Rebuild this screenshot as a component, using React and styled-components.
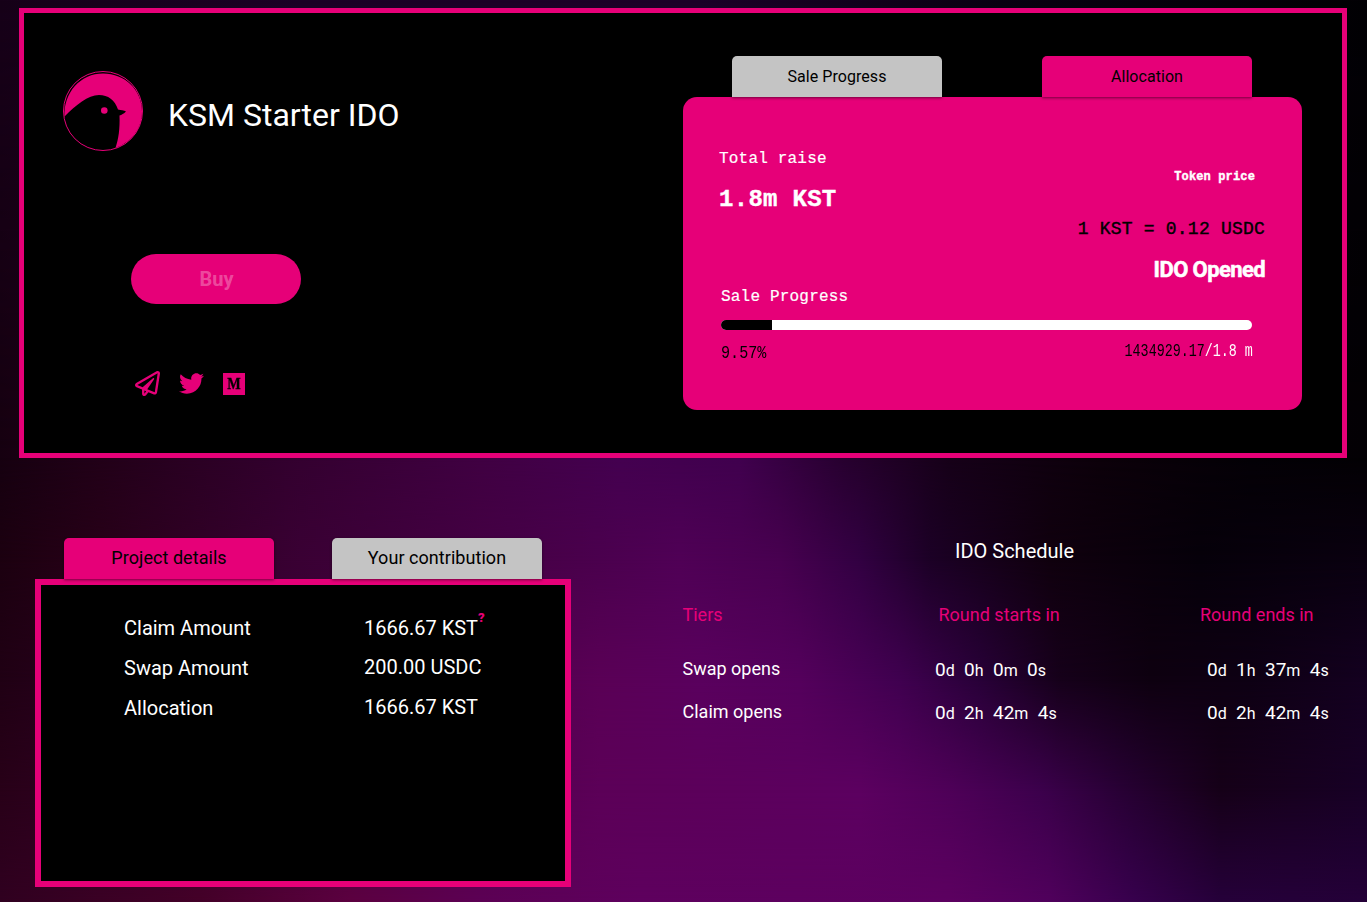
import React from "react";
import styled, { createGlobalStyle } from "styled-components";
import { FaRegPaperPlane, FaTwitter } from "react-icons/fa";

const GlobalStyle = createGlobalStyle`
  * {
    box-sizing: border-box;
  }

  body {
    margin: 0;
    background: #000000;
    color: #ffffff;
    font-family: Roboto, sans-serif;
    overflow: hidden;
  }
`;

const pink = "#e60078";

const Page = styled.div`
  position: relative;
  width: 1367px;
  height: 902px;
  padding: 8px 20px 0 19px;
  overflow: hidden;
  isolation: isolate;
`;

const Glow = styled.div`
  position: absolute;
  inset: 0;
  z-index: -1;
  background: linear-gradient(90deg, ${props => props.stops});
  mask-image: linear-gradient(
    180deg,
    transparent ${props => props.from}px,
    #000 ${props => props.to}px
  );
`;

const Hero = styled.section`
  display: flex;
  justify-content: space-between;
  height: 450px;
  padding: 43px 40px 0 39px;
  border: 5px solid ${pink};
  background: #000000;
`;

const Brand = styled.div`
  display: flex;
  align-items: center;
  gap: 25px;
  margin-top: 15px;
`;

const Title = styled.h1`
  margin: 8px 0 0;
  font-size: 32px;
  font-weight: 400;
  line-height: 38px;
`;

const BuyButton = styled.button`
  display: block;
  width: 170px;
  height: 50px;
  margin: 103px 0 0 68px;
  padding: 0 0 0 1px;
  border: 0;
  border-radius: 25px;
  background: ${pink};
  color: rgba(255, 255, 255, 0.3);
  font-family: Roboto, sans-serif;
  font-size: 20px;
  font-weight: 700;
`;

const Socials = styled.div`
  display: flex;
  align-items: center;
  gap: 19px;
  margin: 67px 0 0 72px;
  color: ${pink};
  font-size: 25px;

  svg {
    display: block;
  }
`;

const MediumMark = styled.span`
  display: flex;
  align-items: center;
  justify-content: center;
  width: 22px;
  height: 22px;
  background: ${pink};
  color: #000000;
  font-family: "Liberation Serif", serif;
  font-size: 17px;
  font-weight: 700;
  line-height: 22px;
  -webkit-text-stroke: 0.3px #000000;

  span {
    transform: scaleX(0.84);
  }
`;

const Sale = styled.div`
  width: 619px;
`;

const Tabs = styled.div`
  display: flex;
  gap: ${props => props.gap}px;
  padding-left: ${props => props.indent}px;
`;

const Tab = styled.button`
  position: relative;
  width: 210px;
  height: 41px;
  padding: 0 0 ${props => props.lift || 0}px;
  border: 0;
  border-radius: 5px 5px 0 0;
  background: ${props => (props.active ? pink : "#c4c4c4")};
  box-shadow: 0 1px 3px rgba(0, 0, 0, 0.5);
  color: #000000;
  font-family: Roboto, sans-serif;
  font-size: ${props => props.size}px;
  font-weight: 400;
  letter-spacing: ${props => props.spacing || 0}px;
`;

const SaleCard = styled.div`
  height: 313px;
  padding: 50px 37px 0 36px;
  border-radius: 14px;
  background: ${pink};
`;

const Figures = styled.div`
  display: flex;
  justify-content: space-between;
  height: 138px;
`;

const Mono = styled.div`
  font-family: "Liberation Mono", monospace;
  font-size: ${props => props.size}px;
  font-weight: ${props => (props.bold ? 700 : 400)};
  letter-spacing: 0.012em;
  line-height: 24px;
  white-space: pre;
  -webkit-text-stroke: ${props => (props.bold ? 0.4 : 0.2)}px currentColor;
`;

const Raised = styled(Mono)`
  margin-top: 17px;
`;

const Price = styled.div`
  display: flex;
  flex-direction: column;
  align-items: flex-end;
  padding-top: 18px;
`;

const TokenLabel = styled(Mono)`
  margin-right: 10px;
`;

const Rate = styled(Mono)`
  margin-top: 28px;
  color: #000000;
  -webkit-text-stroke: 0.4px #000000;
`;

const Status = styled.div`
  margin-top: 16px;
  font-size: 22px;
  font-weight: 700;
  letter-spacing: -0.6px;
  line-height: 26px;
  -webkit-text-stroke: 0.5px #ffffff;
`;

const Progress = styled.div`
  width: 531px;
  margin-left: 2px;
`;

const Track = styled.div`
  height: 10px;
  margin-top: 11px;
  border-radius: 5px;
  background: #ffffff;
  overflow: hidden;
`;

const Bar = styled.div`
  height: 100%;
  background: #000000;
`;

const Amounts = styled.div`
  display: flex;
  justify-content: space-between;
  margin: 10px -1px 0 0;
  color: #000000;
  font-family: "Liberation Mono", monospace;
  font-size: 18px;
  line-height: 22px;
  white-space: pre;
`;

const Percent = styled.span`
  margin-top: 2px;
  transform: scaleX(0.84);
  transform-origin: 0 50%;
`;

const Sold = styled.span`
  transform: scaleX(0.742);
  transform-origin: 100% 50%;
`;

const Cap = styled.span`
  color: #ffffff;
`;

const Lower = styled.section`
  display: flex;
  padding: 80px 0 0 16px;
`;

const Details = styled.div`
  width: 536px;
`;

const DetailCard = styled.div`
  height: 308px;
  padding: 28px 0 0 83px;
  border: 6px solid ${pink};
  background: #000000;
`;

const DetailRow = styled.div`
  display: grid;
  grid-template-columns: 240px 1fr;
  height: 40px;
  font-size: 20px;
  line-height: 30px;

  &:first-child {
    height: 39px;
  }
`;

const DetailLabel = styled.span`
  padding-top: ${props => props.drop || 0}px;
`;

const Hint = styled.sup`
  color: ${pink};
  font-size: 13px;
  font-weight: 900;
  line-height: 0;
  vertical-align: 13px;
`;

const Schedule = styled.div`
  width: 665px;
  margin-left: 111px;
`;

const ScheduleTitle = styled.h2`
  margin: 0;
  font-size: 20px;
  font-weight: 400;
  line-height: 26px;
  text-align: center;
`;

const ScheduleRow = styled.div`
  display: grid;
  grid-template-columns: 252.5px 272px 1fr;
  height: 43px;
  padding-left: 0.5px;
  font-size: 18px;
  line-height: 24px;
`;

const ScheduleHead = styled(ScheduleRow)`
  grid-template-columns: 256px 261.5px 1fr;
  height: 54px;
  margin-top: 39px;
  color: ${pink};
`;

const Countdown = styled.span`
  display: flex;
  gap: 9.4px;
  padding-top: 1px;
  font-size: 19px;
  white-space: nowrap;
`;

const Unit = styled.small`
  font-size: 16px;
`;

// one strip of colour per height, each one faded into the next
const glows = [
  {
    from: -2,
    to: -1,
    stops:
      "#160018 0px, #1c0026 300px, #1c0028 700px, #0a0012 1000px, #020004 1367px"
  },
  {
    from: 0,
    to: 458,
    stops:
      "#160010 0px, #220018 100px, #340030 300px, #400042 480px, #440050 620px, #40004e 740px, #280030 840px, #160018 950px, #0c000a 1100px, #040006 1250px, #030004 1367px"
  },
  {
    from: 458,
    to: 560,
    stops:
      "#1c0010 0px, #280018 100px, #3a0034 300px, #4a004c 580px, #500056 680px, #480050 780px, #320042 860px, #1c0026 930px, #10000e 1050px, #06000a 1200px, #0a0010 1367px"
  },
  {
    from: 560,
    to: 680,
    stops:
      "#200014 0px, #5a0056 600px, #5a005e 700px, #54005c 800px, #400050 900px, #280038 980px, #16001a 1060px, #0e0010 1150px, #0e0014 1250px, #140020 1367px"
  },
  {
    from: 680,
    to: 790,
    stops:
      "#280018 0px, #5c0058 600px, #5c0060 860px, #4e0058 950px, #3c004c 1040px, #260032 1130px, #160018 1220px, #180026 1367px"
  },
  {
    from: 790,
    to: 902,
    stops:
      "#300020 0px, #440028 200px, #5c0040 350px, #5c0054 480px, #5e005e 640px, #5c0060 950px, #50005c 1050px, #38004e 1130px, #26003a 1220px, #240038 1367px"
  }
];

const details = [
  { label: "Claim Amount", value: "1666.67 KST", hint: true },
  { label: "Swap Amount", value: "200.00 USDC", drop: 1 },
  { label: "Allocation", value: "1666.67 KST", drop: 1 }
];

const rounds = [
  { tier: "Swap opens", starts: [0, 0, 0, 0], ends: [0, 1, 37, 4] },
  { tier: "Claim opens", starts: [0, 2, 42, 4], ends: [0, 2, 42, 4] }
];

const Logo = () => (
  <svg width="80" height="80" viewBox="0 0 80 80">
    <circle cx="40" cy="40" r="39.5" fill="none" stroke={pink} />
    <path
      fill={pink}
      d="M1.5 45.5C0.5 21 18 2.5 40 2.5C62 2.5 79 19 79 40.5C79 57 69 71 52.5 77C55.5 68 57 58 56.5 44.5C58.5 44 61 42.5 63 40.5C61 39.5 58 39 55 38.5C52 29 45 24 36 24C25 24 13 34 1.5 45.5Z"
    />
    <circle cx="41.3" cy="39.5" r="3.3" fill={pink} />
  </svg>
);

const Timer = ({ time }) => (
  <Countdown>
    {["d", "h", "m", "s"].map((unit, i) => (
      <span key={unit}>
        {time[i]}
        <Unit>{unit}</Unit>
      </span>
    ))}
  </Countdown>
);

const App = () => {
  return (
    <Page>
      <GlobalStyle />
      {glows.map(glow => (
        <Glow key={glow.to} {...glow} />
      ))}
      <Hero>
        <div>
          <Brand>
            <Logo />
            <Title>KSM Starter IDO</Title>
          </Brand>
          <BuyButton>Buy</BuyButton>
          <Socials>
            <FaRegPaperPlane />
            <FaTwitter />
            <MediumMark>
              <span>M</span>
            </MediumMark>
          </Socials>
        </div>
        <Sale>
          <Tabs gap={100} indent={49}>
            <Tab size={16} spacing={0.05}>
              Sale Progress
            </Tab>
            <Tab size={16} spacing={0.05} active>
              Allocation
            </Tab>
          </Tabs>
          <SaleCard>
            <Figures>
              <div>
                <Mono size={16}>Total raise</Mono>
                <Raised size={24} bold>
                  1.8m KST
                </Raised>
              </div>
              <Price>
                <TokenLabel size={12} bold>
                  Token price
                </TokenLabel>
                <Rate size={18}>1 KST = 0.12 USDC</Rate>
                <Status>IDO Opened</Status>
              </Price>
            </Figures>
            <Progress>
              <Mono size={16}>Sale Progress</Mono>
              <Track>
                <Bar style={{ width: "9.57%" }} />
              </Track>
              <Amounts>
                <Percent>9.57%</Percent>
                <Sold>
                  1434929.17<Cap>/1.8 m</Cap>
                </Sold>
              </Amounts>
            </Progress>
          </SaleCard>
        </Sale>
      </Hero>
      <Lower>
        <Details>
          <Tabs gap={58} indent={29}>
            <Tab size={18} spacing={0.05} lift={2} active>
              Project details
            </Tab>
            <Tab size={18} spacing={0.05} lift={2}>
              Your contribution
            </Tab>
          </Tabs>
          <DetailCard>
            {details.map(row => (
              <DetailRow key={row.label}>
                <DetailLabel drop={row.drop}>{row.label}</DetailLabel>
                <span>
                  {row.value}
                  {row.hint && <Hint>?</Hint>}
                </span>
              </DetailRow>
            ))}
          </DetailCard>
        </Details>
        <Schedule>
          <ScheduleTitle>IDO Schedule</ScheduleTitle>
          <ScheduleHead>
            <span>Tiers</span>
            <span>Round starts in</span>
            <span>Round ends in</span>
          </ScheduleHead>
          {rounds.map(round => (
            <ScheduleRow key={round.tier}>
              <span>{round.tier}</span>
              <Timer time={round.starts} />
              <Timer time={round.ends} />
            </ScheduleRow>
          ))}
        </Schedule>
      </Lower>
    </Page>
  );
};

export default App;
